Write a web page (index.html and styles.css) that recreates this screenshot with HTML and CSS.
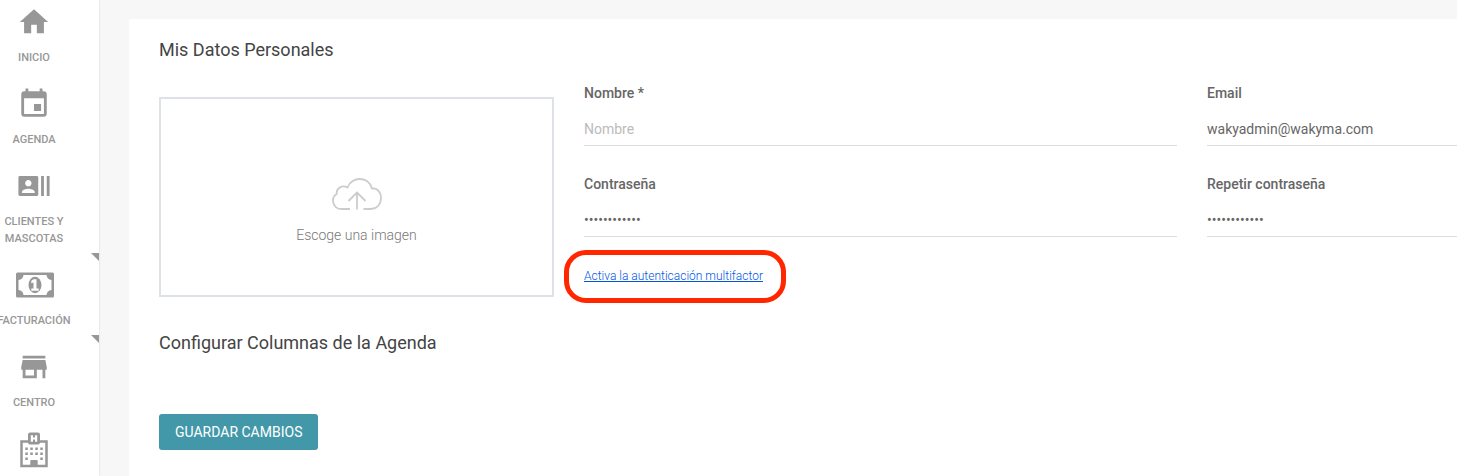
FILE: index.html
```html
<!DOCTYPE html>
<html lang="es">
<head>
<meta charset="utf-8">
<title>Mis Datos Personales</title>
<link rel="stylesheet" href="styles.css">
</head>
<body class="app">
<nav class="sidebar">
  <a class="nav-item" href="#inicio">
    <svg class="nav-icon" viewBox="0 0 24 24"><path d="M10 20v-6h4v6h5v-8h3L12 3 2 12h3v8z"/></svg>
    <span class="nav-label">Inicio</span>
  </a>
  <a class="nav-item" href="#agenda">
    <svg class="nav-icon" viewBox="0 0 24 24"><path d="M17 12h-5v5h5v-5zM16 1v2H8V1H6v2H5c-1.110 0-1.990.9-1.990 2L3 19c0 1.100.890 2 2 2h14c1.100 0 2-.9 2-2V5c0-1.100-.9-2-2-2h-1V1h-2zm3 18H5V8h14v11z"/></svg>
    <span class="nav-label">Agenda</span>
  </a>
  <a class="nav-item has-submenu" href="#clientes">
    <svg class="nav-icon" viewBox="0 0 24 24"><path d="M21 5v14h2V5h-2zm-4 14h2V5h-2v14zM14 5H2c-.550 0-1 .450-1 1v12c0 .550.450 1 1 1h12c.550 0 1-.450 1-1V6c0-.550-.450-1-1-1zM8 7.750c1.240 0 2.250 1.010 2.250 2.250S9.240 12.250 8 12.250 5.750 11.240 5.750 10 6.760 7.750 8 7.750zM12.500 17h-9v-.750c0-1.500 3-2.250 4.500-2.250s4.500.750 4.500 2.250V17z"/></svg>
    <span class="nav-label">Clientes y<br>Mascotas</span>
  </a>
  <a class="nav-item has-submenu" href="#facturacion">
    <svg class="nav-icon nav-icon-wide" viewBox="-2 0 40 34"><path fill-rule="evenodd" d="M1.500 4.500h35a1.500 1.500 0 0 1 1.500 1.500v22a1.500 1.500 0 0 1-1.500 1.500h-35A1.500 1.500 0 0 1 0 28V6A1.500 1.500 0 0 1 1.500 4.500zM7.500 7Q7 11.500 2.500 12v10Q7 22.500 7.500 27h23Q31 22.500 35.500 22V12Q31 11.500 30.500 7z"/><ellipse cx="19" cy="17" rx="6.500" ry="8.300"/><path class="icon-cut" d="M17.500 11.200h3v9.300h2.200v2.300h-7.400v-2.300h2.200v-6l-2.200.8v-2.500z"/></svg>
    <span class="nav-label">Facturación</span>
  </a>
  <a class="nav-item" href="#centro">
    <svg class="nav-icon" viewBox="0 0 24 24"><path d="M20 4H4v2h16V4zm1 10v-2l-1-5H4l-1 5v2h1v6h10v-6h4v6h2v-6h1zm-9 4H6v-4h6v4z"/></svg>
    <span class="nav-label">Centro</span>
  </a>
  <a class="nav-item" href="#hospital" aria-label="Hospital">
    <svg class="nav-icon nav-icon-tall" viewBox="0 0 28 36"><path class="icon-line" d="M9 9.500H1.500v24.500h25V9.500H19"/><rect x="8" y="0.500" width="12" height="12" rx="2"/><path class="icon-cut" d="M10.800 3.200H13v2.300h2V3.200h2.200v6.600H15V7.500h-2v2.300h-2.200z"/><path d="M10.300 35v-6a1 1 0 0 1 1-1h5.400a1 1 0 0 1 1 1v6zM5.300 15.500h2.500V18H5.300zm5 0h2.500V18h-2.500zm5 0h2.500V18h-2.500zm5 0h2.500V18h-2.500zm-15 5h2.500V23H5.300zm5 0h2.500V23h-2.500zm5 0h2.500V23h-2.500zm5 0h2.500V23h-2.500zm-15 5h2.500V28H5.300zm15 0h2.500V28h-2.500z"/></svg>
  </a>
</nav>
<main class="content">
  <form class="card">
    <h1 class="card-title">Mis Datos Personales</h1>
    <div class="profile">
      <button class="upload" type="button">
        <svg class="upload-icon" viewBox="0 0 50 34"><path d="M18 32H9.500a8.300 8.300 0 0 1-4.700-15.200C4 11.500 10 7.500 15.500 10.500 19-.5 36.500-1.500 40 11.500 46 11 49 16 49 21c0 6-4 11-10 11h-7.500M25 32.500V16M16.500 24l8.500-8.500 8.500 8.500"/></svg>
        <span>Escoge una imagen</span>
      </button>
      <div class="column">
        <div class="field">
          <label class="field-label" for="nombre">Nombre *</label>
          <input class="field-input" id="nombre" type="text" placeholder="Nombre">
        </div>
        <div class="field">
          <label class="field-label" for="clave">Contraseña</label>
          <input class="field-input" id="clave" type="password" value="contrasena12">
        </div>
        <div class="mfa"><a class="mfa-link" href="#multifactor">Activa la autenticación multifactor</a></div>
      </div>
      <div class="column">
        <div class="field">
          <label class="field-label" for="email">Email</label>
          <input class="field-input" id="email" type="email" value="wakyadmin@wakyma.com">
        </div>
        <div class="field">
          <label class="field-label" for="repetir">Repetir contraseña</label>
          <input class="field-input" id="repetir" type="password" value="contrasena12">
        </div>
      </div>
    </div>
    <h2 class="card-title section-title">Configurar Columnas de la Agenda</h2>
    <button class="save" type="submit">Guardar cambios</button>
  </form>
</main>
</body>
</html>
```
FILE: styles.css
```css
* {
  box-sizing: border-box;
}

.app {
  display: flex;
  height: 100vh;
  margin: 0;
  overflow: hidden;
  background: #f7f7f7;
  color: #666;
  font-family: Roboto, sans-serif;
  font-size: 14px;
  line-height: 20px;
}

.sidebar {
  flex: none;
  width: 99px;
  padding-top: 5px;
  background: #fff;
  box-shadow: 0 0 2px rgba(0, 0, 0, 0.15);
}

.nav-item {
  position: relative;
  display: flex;
  flex-direction: column;
  align-items: center;
  gap: 10px;
  padding: 0 31px 21px 0;
  color: #979797;
  font-size: 11px;
  font-weight: 500;
  line-height: 17px;
  text-align: center;
  text-decoration: none;
  text-transform: uppercase;
}

.has-submenu::after {
  content: "";
  position: absolute;
  right: 0;
  bottom: 7px;
  width: 8px;
  height: 8px;
  background: #979797;
  clip-path: polygon(0 0, 100% 0, 100% 100%);
}

.nav-label {
  white-space: nowrap;
}

.nav-icon {
  flex: none;
  width: 34px;
  height: 34px;
  fill: #979797;
}

.nav-icon-wide {
  width: 40px;
}

.nav-icon-tall {
  width: 28px;
  height: 36px;
}

.nav-icon .icon-cut {
  fill: #fff;
}

.icon-line {
  fill: none;
  stroke: #979797;
  stroke-width: 2.5;
}

.content {
  flex: 1;
  min-width: 0;
  padding: 19px 0 0 30px;
}

.card {
  min-height: 100%;
  padding: 19px 0 26px 30px;
  border-radius: 3px 0 0 0;
  background: #fff;
}

.card-title {
  margin: 0;
  color: #444;
  font-size: 18px;
  font-weight: 400;
  line-height: 24px;
}

.section-title {
  margin: 34px 0 59px;
}

.profile {
  display: grid;
  grid-template-columns: 395fr 593fr 250fr;
  gap: 30px;
  margin-top: 21px;
}

.upload {
  display: flex;
  flex-direction: column;
  align-items: center;
  justify-content: center;
  gap: 14px;
  height: 200px;
  margin-top: 14px;
  padding: 28px 0 0;
  border: 2px solid #dee2e6;
  background: #fff;
  color: #777;
  font: 300 14px/20px Roboto, sans-serif;
}

.upload-icon {
  width: 50px;
  height: 34px;
  fill: none;
  stroke: #ccc;
  stroke-width: 1.8;
}

.column {
  display: flex;
  flex-direction: column;
  gap: 28px;
  min-width: 0;
}

.field {
  display: flex;
  flex-direction: column;
  gap: 10px;
}

.field-label {
  font-weight: 500;
}

.field-input {
  width: 100%;
  height: 33px;
  padding: 0;
  border: 0;
  border-bottom: 1px solid #ddd;
  background: none;
  color: #666;
  font: 400 14px/20px Roboto, sans-serif;
}

.field-input::placeholder {
  color: #bbb;
}

.mfa {
  position: relative;
  align-self: flex-start;
}

.mfa::after {
  content: "";
  position: absolute;
  inset: -15px -23px -17px -20px;
  border: 5px solid #ff2600;
  border-radius: 22px;
  pointer-events: none;
}

.mfa-link {
  color: #0056e0;
  font-size: 12px;
  font-weight: 300;
}

.save {
  display: block;
  height: 36px;
  padding: 0 16px;
  border: 0;
  border-radius: 3px;
  background: #4298a9;
  color: #fff;
  font: 400 14px/20px Roboto, sans-serif;
  text-transform: uppercase;
}
```
